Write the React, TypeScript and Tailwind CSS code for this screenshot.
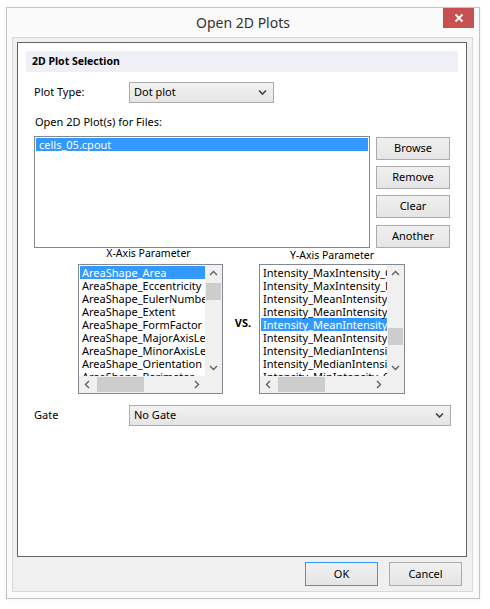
import React from "react";

const FONT = { fontFamily: '"Noto Sans", "Open Sans", sans-serif' };

const xItems = [
  "AreaShape_Area",
  "AreaShape_Eccentricity",
  "AreaShape_EulerNumber",
  "AreaShape_Extent",
  "AreaShape_FormFactor",
  "AreaShape_MajorAxisLength",
  "AreaShape_MinorAxisLength",
  "AreaShape_Orientation",
  "AreaShape_Perimeter",
];

const yItems = [
  "Intensity_MaxIntensity_Cells",
  "Intensity_MaxIntensity_DNA",
  "Intensity_MeanIntensityEdge",
  "Intensity_MeanIntensityEdge",
  "Intensity_MeanIntensity_Cells",
  "Intensity_MeanIntensity_DNA",
  "Intensity_MedianIntensity_C",
  "Intensity_MedianIntensity_D",
  "Intensity_MinIntensity_Cells",
];

function Chevron({ dir }: { dir: "up" | "down" | "left" | "right" }) {
  const pts = {
    up: "1,6 4.5,2.5 8,6",
    down: "1,3 4.5,6.5 8,3",
    left: "6,1 2.5,4.5 6,8",
    right: "3,1 6.5,4.5 3,8",
  }[dir];
  return (
    <svg width="9" height="9" viewBox="0 0 9 9">
      <polyline points={pts} fill="none" stroke="#606060" strokeWidth="1.4" />
    </svg>
  );
}

function Select({ value, width }: { value: string; width: string }) {
  return (
    <div
      className={`${width} h-[21px] flex items-center justify-between border border-[#acacac] bg-gradient-to-b from-[#f2f2f2] to-[#e5e5e5] pl-[4px] pr-[6px] text-[11px] text-black`}
    >
      <span>{value}</span>
      <svg width="9" height="7" viewBox="0 0 9 7">
        <polyline points="1,1.5 4.5,5 8,1.5" fill="none" stroke="#444" strokeWidth="1.6" />
      </svg>
    </div>
  );
}

function Btn({ label, primary, className = "" }: { label: string; primary?: boolean; className?: string }) {
  return (
    <div
      className={`flex items-center justify-center border bg-gradient-to-b from-[#f0f0f0] to-[#e5e5e5] text-[11px] text-black ${
        primary ? "border-[#3399ff]" : "border-[#acacac]"
      } ${className}`}
    >
      {label}
    </div>
  );
}

function ListBox({
  items,
  selected,
  width,
  thumbTop,
  hThumbLeft,
}: {
  items: string[];
  selected: number;
  width: string;
  thumbTop: number;
  hThumbLeft: number;
}) {
  return (
    <div className={`${width} h-[130px] border border-[#828790] bg-white grid grid-cols-[1fr_17px] grid-rows-[1fr_17px]`}>
      <div className="overflow-hidden pl-[1px] pt-[1px]">
        {items.map((it, i) => (
          <div
            key={i}
            className={`h-[13px] leading-[13px] whitespace-nowrap pl-[2px] text-[11px] ${
              i === selected ? "bg-[#3399ff] text-white" : "text-black"
            }`}
          >
            {it}
          </div>
        ))}
      </div>
      <div className="flex flex-col bg-[#f0f0f0]">
        <div className="h-[17px] flex items-center justify-center">
          <Chevron dir="up" />
        </div>
        <div className="flex-1 relative">
          <div className="absolute left-[1px] right-[1px] h-[17px] bg-[#cdcdcd]" style={{ top: thumbTop }} />
        </div>
        <div className="h-[17px] flex items-center justify-center">
          <Chevron dir="down" />
        </div>
      </div>
      <div className="flex bg-[#f0f0f0]">
        <div className="w-[17px] flex items-center justify-center">
          <Chevron dir="left" />
        </div>
        <div className="flex-1 relative">
          <div className="absolute top-[1px] bottom-[1px] w-[47px] bg-[#cdcdcd]" style={{ left: hThumbLeft }} />
        </div>
        <div className="w-[17px] flex items-center justify-center">
          <Chevron dir="right" />
        </div>
      </div>
      <div className="bg-[#f0f0f0]" />
    </div>
  );
}

export default function App() {
  return (
    <div className="w-[490px] h-[609px] bg-white pt-[7px] pl-[6px]" style={FONT}>
      {/* Window */}
      <div className="w-[474px] h-[592px] border border-[#c3c3c3] bg-[#fafafa] flex flex-col shadow-[0_0_3px_rgba(0,0,0,0.08)]">
        {/* Title bar */}
        <div className="h-[29px] relative flex items-center justify-center">
          <span className="text-[14px] text-[#333]">Open 2D Plots</span>
          <div className="absolute top-0 right-[5px] w-[31px] h-[20px] bg-[#c75050] flex items-center justify-center">
            <svg width="10" height="10" viewBox="0 0 10 10">
              <path d="M1.5 1.5 L8.5 8.5 M8.5 1.5 L1.5 8.5" stroke="white" strokeWidth="1.8" />
            </svg>
          </div>
        </div>

        {/* Client area */}
        <div className="ml-[5px] w-[461px] h-[555px] border border-[#d9d9d9] bg-[#f0f0f0] flex flex-col">
          {/* Panel */}
          <div className="ml-[4px] mt-[4px] w-[450px] h-[515px] border border-[#646464] bg-white flex flex-col">
            <div className="ml-[8px] mt-[8px] w-[432px] h-[21px] bg-[#eff0f5] flex items-center pl-[6px] text-[10.5px] font-bold text-black">
              2D Plot Selection
            </div>

            {/* Plot type */}
            <div className="mt-[10px] flex items-center pl-[16px]">
              <span className="w-[95px] text-[11px] text-black">Plot Type:</span>
              <Select value="Dot plot" width="w-[145px]" />
            </div>

            <div className="mt-[11px] pl-[17px] h-[16px] leading-[16px] text-[11px] text-black">
              Open 2D Plot(s) for Files:
            </div>

            {/* Files */}
            <div className="mt-[6px] flex pl-[16px]">
              <div className="w-[336px] h-[112px] border border-[#828790] bg-white p-[1px]">
                <div className="h-[13px] leading-[13px] bg-[#3399ff] text-white text-[11px] pl-[3px]">cells_05.cpout</div>
              </div>
              <div className="ml-[6px] flex flex-col">
                <Btn label="Browse" className="mt-[1px] w-[74px] h-[23px]" />
                <Btn label="Remove" className="mt-[6px] w-[74px] h-[23px]" />
                <Btn label="Clear" className="mt-[6px] w-[74px] h-[23px]" />
                <Btn label="Another" className="mt-[7px] w-[74px] h-[23px]" />
              </div>
            </div>

            {/* Axis parameters */}
            <div className="flex pl-[60px]">
              <div className="flex flex-col w-[145px]">
                <div className="h-[16px] leading-[10px] text-center pr-[4px] text-[10.5px] text-black">X-Axis Parameter</div>
                <ListBox items={xItems} selected={0} width="w-[145px]" thumbTop={1} hThumbLeft={1} />
              </div>
              <div className="w-[36px] flex items-center justify-center pt-[16px] pb-[12px] pl-[4px] text-[11px] font-bold text-black">
                VS.
              </div>
              <div className="flex flex-col w-[146px]">
                <div className="h-[16px] pt-[2px] leading-[10px] text-center text-[10.5px] text-black">Y-Axis Parameter</div>
                <ListBox items={yItems} selected={4} width="w-[146px]" thumbTop={46} hThumbLeft={1} />
              </div>
            </div>

            {/* Gate */}
            <div className="mt-[11px] flex items-center pl-[16px]">
              <span className="w-[95px] text-[11px] text-black">Gate</span>
              <Select value="No Gate" width="w-[322px]" />
            </div>
          </div>

          {/* Bottom buttons */}
          <div className="mt-[5px] flex justify-end pr-[10px] gap-[11px]">
            <Btn label="OK" primary className="w-[73px] h-[24px]" />
            <Btn label="Cancel" className="w-[73px] h-[24px]" />
          </div>
        </div>
      </div>
    </div>
  );
}
